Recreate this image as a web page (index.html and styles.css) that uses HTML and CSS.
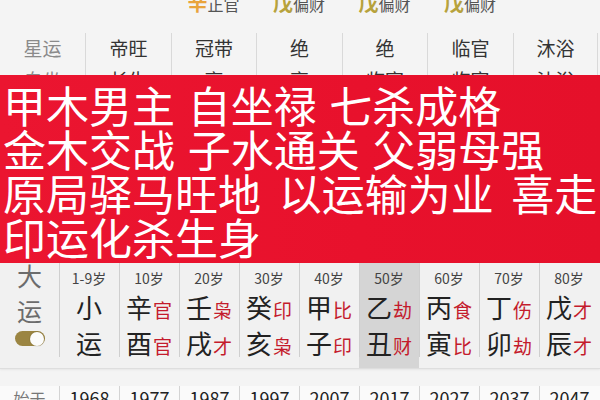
FILE: index.html
```html
<!DOCTYPE html>
<html lang="zh-CN">
<head>
<meta charset="utf-8">
<title>大运</title>
<link rel="stylesheet" href="styles.css">
</head>
<body>
<div class="page">
  <section class="chart">
    <div class="row row-gods">
      <div class="cell"></div>
      <div class="cell"></div>
      <div class="cell"><span class="stem gold">辛</span><span class="god">正官</span></div>
      <div class="cell"><span class="stem olive">戊</span><span class="god">偏财</span></div>
      <div class="cell"><span class="stem olive">戊</span><span class="god">偏财</span></div>
      <div class="cell"><span class="stem olive">戊</span><span class="god">偏财</span></div>
      <div class="cell"></div>
    </div>
    <div class="table">
      <div class="row row-star">
        <div class="cell label">星运</div>
        <div class="cell">帝旺</div>
        <div class="cell">冠带</div>
        <div class="cell">绝</div>
        <div class="cell">绝</div>
        <div class="cell">临官</div>
        <div class="cell">沐浴</div>
      </div>
      <div class="row row-self">
        <div class="cell label">自坐</div>
        <div class="cell">长生</div>
        <div class="cell">衰</div>
        <div class="cell">衰</div>
        <div class="cell">临官</div>
        <div class="cell">临官</div>
        <div class="cell">沐浴</div>
      </div>
    </div>
  </section>

  <section class="luck">
    <div class="luck-label">
      <span class="big">大</span>
      <span class="big second">运</span>
      <span class="toggle"><span class="knob"></span></span>
    </div>
    <div class="luck-col">
      <div class="age">1-9岁</div>
      <div class="pair"><span class="gz">小</span></div>
      <div class="pair"><span class="gz">运</span></div>
    </div>
    <div class="luck-col">
      <div class="age">10岁</div>
      <div class="pair"><span class="gz">辛</span><span class="god-red">官</span></div>
      <div class="pair"><span class="gz">酉</span><span class="god-red">官</span></div>
    </div>
    <div class="luck-col">
      <div class="age">20岁</div>
      <div class="pair"><span class="gz">壬</span><span class="god-red">枭</span></div>
      <div class="pair"><span class="gz">戌</span><span class="god-red">才</span></div>
    </div>
    <div class="luck-col">
      <div class="age">30岁</div>
      <div class="pair"><span class="gz">癸</span><span class="god-red">印</span></div>
      <div class="pair"><span class="gz">亥</span><span class="god-red">枭</span></div>
    </div>
    <div class="luck-col">
      <div class="age">40岁</div>
      <div class="pair"><span class="gz">甲</span><span class="god-red">比</span></div>
      <div class="pair"><span class="gz">子</span><span class="god-red">印</span></div>
    </div>
    <div class="luck-col current">
      <div class="age">50岁</div>
      <div class="pair"><span class="gz">乙</span><span class="god-red">劫</span></div>
      <div class="pair"><span class="gz">丑</span><span class="god-red">财</span></div>
    </div>
    <div class="luck-col">
      <div class="age">60岁</div>
      <div class="pair"><span class="gz">丙</span><span class="god-red">食</span></div>
      <div class="pair"><span class="gz">寅</span><span class="god-red">比</span></div>
    </div>
    <div class="luck-col">
      <div class="age">70岁</div>
      <div class="pair"><span class="gz">丁</span><span class="god-red">伤</span></div>
      <div class="pair"><span class="gz">卯</span><span class="god-red">劫</span></div>
    </div>
    <div class="luck-col">
      <div class="age">80岁</div>
      <div class="pair"><span class="gz">戊</span><span class="god-red">才</span></div>
      <div class="pair"><span class="gz">辰</span><span class="god-red">才</span></div>
    </div>
  </section>

  <section class="years">
    <div class="year-label">始于</div>
    <div class="year">1968</div>
    <div class="year">1977</div>
    <div class="year">1987</div>
    <div class="year">1997</div>
    <div class="year">2007</div>
    <div class="year">2017</div>
    <div class="year">2027</div>
    <div class="year">2037</div>
    <div class="year">2047</div>
  </section>

  <div class="banner">
    <div class="line">甲木男主 自坐禄 七杀成格</div>
    <div class="line">金木交战 子水通关 父弱母强</div>
    <div class="line wide">原局驿马旺地 以运输为业 喜走</div>
    <div class="line">印运化杀生身</div>
  </div>
</div>
</body>
</html>
```

FILE: styles.css
```css
* { box-sizing: border-box; }

html, body {
  margin: 0;
  padding: 0;
}

body {
  background: #f4f4f4;
  font-family: "Noto Sans CJK SC", "Noto Sans", sans-serif;
  color: #2a2a2a;
  width: 600px;
  height: 400px;
  overflow: hidden;
}

.page {
  position: relative;
  width: 600px;
  height: 400px;
  overflow: hidden;
}

/* ---------- top chart ---------- */
.chart {
  height: 263px;
  overflow: hidden;
  background: #f4f4f4;
}

.row {
  display: grid;
  grid-template-columns: 85px 86px 85px 86px 85px 86px 85px;
}

.row-gods {
  margin-top: -8px;
  height: 22px;
}

.row-gods .cell {
  display: flex;
  justify-content: center;
  align-items: baseline;
  line-height: 22px;
}

.stem {
  font-size: 20px;
  font-weight: 700;
}

.gold { color: #e9a43c; }
.olive { color: #b7a23c; }

.god {
  font-size: 16px;
  color: #555;
}

.table {
  margin-top: 19px;
}

.row-star .cell,
.row-self .cell {
  text-align: center;
  font-size: 19px;
  color: #333;
  border-left: 1px solid #d9d9d9;
}

.row-star .cell:first-child,
.row-self .cell:first-child {
  border-left: none;
}

.row-star .cell:last-child,
.row-self .cell:last-child {
  border-right: 1px solid #d9d9d9;
}

.row-star .cell { line-height: 30px; }
.row-self .cell { line-height: 34px; }

.cell.label { color: #8a8a8a; }

/* ---------- luck (大运) card ---------- */
.luck {
  display: grid;
  grid-template-columns: 59px repeat(9, 60px);
  height: 106px;
  background: #f1f1f1;
  border-bottom: 1px solid #dedede;
  box-shadow: 0 1px 2px rgba(0, 0, 0, 0.06);
}

.luck-label {
  display: flex;
  flex-direction: column;
  align-items: center;
  color: #6c6c6c;
}

.big {
  font-size: 25px;
  line-height: 26px;
  margin-top: -1px;
}

.big.second { margin-top: 9px; }

.toggle {
  display: flex;
  justify-content: flex-end;
  align-items: center;
  width: 30px;
  height: 15px;
  margin-top: 8px;
  padding: 1px;
  border-radius: 8px;
  background: #9b8542;
}

.knob {
  width: 14px;
  height: 14px;
  border-radius: 50%;
  background: #fbfbfb;
  box-shadow: 0 0 0 1px rgba(0, 0, 0, 0.06);
}

.luck-col {
  display: flex;
  flex-direction: column;
  align-items: center;
  padding-top: 6px;
  background-image: linear-gradient(#cfcfcf, #cfcfcf);
  background-size: 1px 94px;
  background-position: left top;
  background-repeat: no-repeat;
}

.luck-col.current {
  background-color: #d5d5d5;
}

.age {
  font-size: 14px;
  line-height: 18px;
  color: #444;
}

.pair {
  display: flex;
  justify-content: center;
  align-items: baseline;
  height: 36px;
  line-height: 36px;
}

.age + .pair {
  margin-top: 2px;
}

.gz {
  font-size: 26px;
  color: #222;
}

.god-red {
  font-size: 19px;
  color: #c41b2c;
  margin-left: 1px;
}

/* ---------- years row ---------- */
.years {
  display: grid;
  grid-template-columns: 59px repeat(9, 60px);
  margin-top: 17px;
  background: #fafafa;
}

.year-label {
  text-align: center;
  font-size: 16px;
  line-height: 24px;
  color: #777;
}

.year {
  text-align: center;
  font-size: 18px;
  line-height: 24px;
  color: #222;
  border-left: 1px solid #d4d4d4;
}

/* ---------- red overlay banner ---------- */
.banner {
  position: absolute;
  top: 75px;
  left: 0;
  width: 600px;
  height: 188px;
  padding: 7px 0 0 3px;
  background: linear-gradient(90deg, #eb1530 0%, #e8112c 60%, #e5102a 100%);
  color: #ffffff;
  font-size: 43px;
  line-height: 44px;
  font-weight: 400;
  word-spacing: 3px;
  white-space: nowrap;
}

.banner .wide {
  word-spacing: 8px;
}
```
